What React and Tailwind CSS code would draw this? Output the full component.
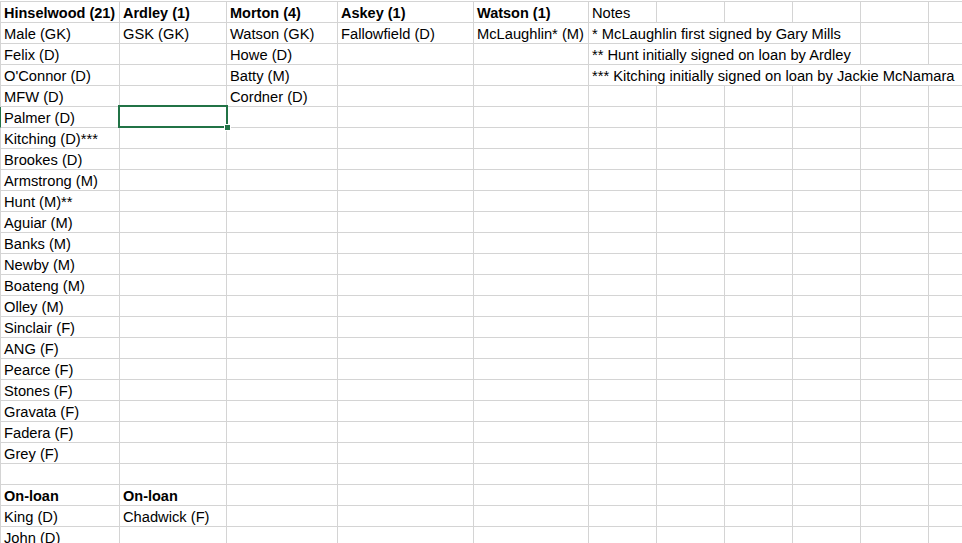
import React from "react"

const colWidths = ["w-[120px] border-l", "w-[107px]", "w-[111px]", "w-[136px]", "w-[115px]", "w-[68px]", "w-[68px]", "w-[68px]", "w-[68px]", "w-[68px]", "w-[68px]"]

const spanWidths = {4: "w-[272px]", 6: "w-[408px]"}

const squad = [
    ["Hinselwood (21)", "Ardley (1)", "Morton (4)", "Askey (1)", "Watson (1)"],
    ["Male (GK)", "GSK (GK)", "Watson (GK)", "Fallowfield (D)", "McLaughlin* (M)"],
    ["Felix (D)", "", "Howe (D)"],
    ["O'Connor (D)", "", "Batty (M)"],
    ["MFW (D)", "", "Cordner (D)"],
    ["Palmer (D)"],
    ["Kitching (D)***"],
    ["Brookes (D)"],
    ["Armstrong (M)"],
    ["Hunt (M)**"],
    ["Aguiar (M)"],
    ["Banks (M)"],
    ["Newby (M)"],
    ["Boateng (M)"],
    ["Olley (M)"],
    ["Sinclair (F)"],
    ["ANG (F)"],
    ["Pearce (F)"],
    ["Stones (F)"],
    ["Gravata (F)"],
    ["Fadera (F)"],
    ["Grey (F)"],
    [""],
    ["On-loan", "On-loan"],
    ["King (D)", "Chadwick (F)"],
    ["John (D)"],
]

// notes column: text spills over the empty cells to its right
const notes = {
    0: {text: "Notes", span: 1},
    1: {text: "* McLaughlin first signed by Gary Mills", span: 4},
    2: {text: "** Hunt initially signed on loan by Ardley", span: 4},
    3: {text: "*** Kitching initially signed on loan by Jackie McNamara", span: 6},
}

const boldRows = [0, 23]
const activeRow = 5
const activeCol = 1

const Cell = ({className, bold, active, children}) => (
    <div className={`relative h-[21px] shrink-0 border-r border-b border-[#d4d4d4] pl-[3px] pt-[2px] leading-[19px] whitespace-nowrap ${bold ? "font-bold text-[14.5px]" : ""} ${active ? "z-10" : ""} ${className}`}>
        {children}
        {active && (
            <div className="absolute -left-[2px] -top-[2px] -right-[2px] -bottom-[1px] border-2 border-[#217346]">
                <div className="absolute -right-[5px] -bottom-[5px] w-[7px] h-[7px] bg-[#217346] border border-white"></div>
            </div>
        )}
    </div>
)

const Row = ({index, values}) => {
    const bold = boldRows.includes(index)
    const note = notes[index]
    const cells = []
    for (let c = 0; c < 5; c++) {
        const lead = c === 0 && index === activeRow ? "border-l-[#217346]" : ""
        cells.push(
            <Cell key={c} bold={bold} active={index === activeRow && c === activeCol} className={`${colWidths[c]} ${lead}`}>
                {values[c] || ""}
            </Cell>
        )
    }
    let c = 5
    if (note) {
        cells.push(
            <Cell key="note" className={note.span > 1 ? spanWidths[note.span] : colWidths[5]}>
                {note.text}
            </Cell>
        )
        c += note.span
    }
    for (; c < colWidths.length; c++) {
        cells.push(<Cell key={c} className={colWidths[c]}/>)
    }
    return <div className="flex">{cells}</div>
}

export default function App() {
    return (
        <div className="w-[962px] h-[543px] overflow-hidden bg-white text-black text-[14.7px] font-['Liberation_Sans',Arial,sans-serif] pt-px">
            <div className="border-t border-[#d4d4d4]">
                {squad.map((values, i) => (
                    <Row key={i} index={i} values={values}/>
                ))}
            </div>
        </div>
    )
}
